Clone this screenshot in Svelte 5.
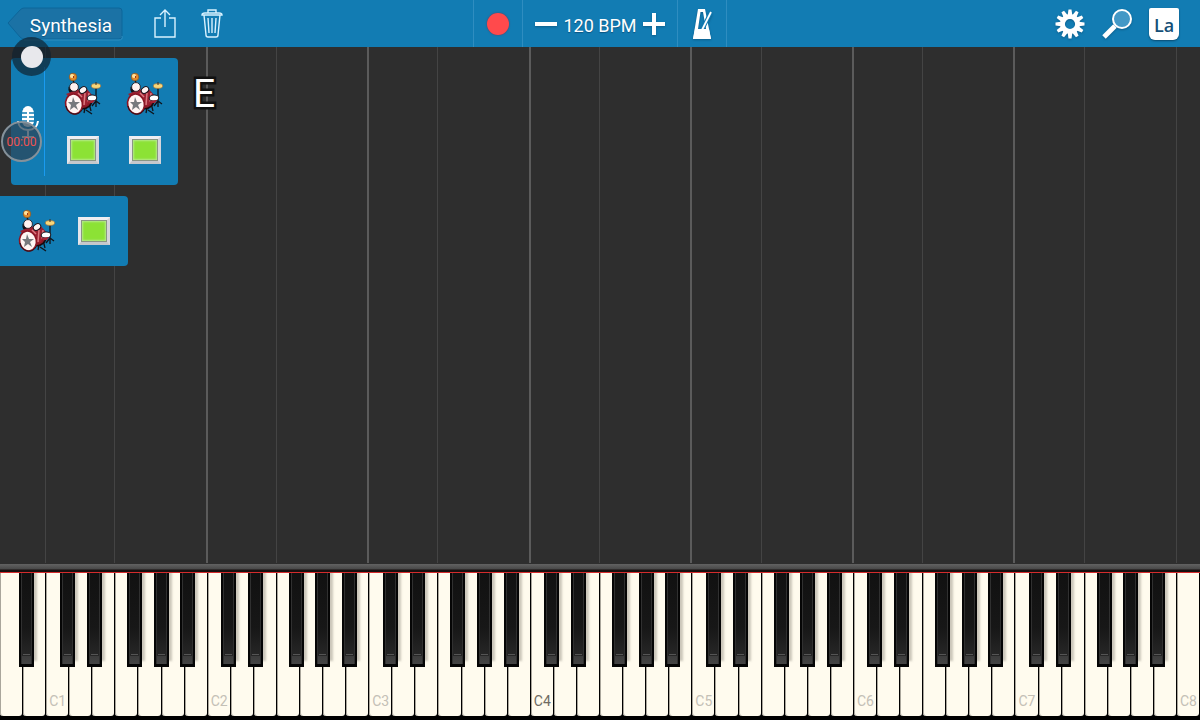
<script lang="ts">
  type Key = {
    name: string;
    octave: number;
    sharp: boolean;
  };

  const letters = ['A', 'B', 'C', 'D', 'E', 'F', 'G'];

  const keys: Key[] = Array.from({ length: 52 }, (_, i) => {
    const name = letters[i % 7];
    return {
      name,
      octave: Math.floor((i + 5) / 7),
      sharp: i < 51 && name !== 'B' && name !== 'E',
    };
  });

  let bpm = 120;
  let recording = false;
  let ticking = false;

  function guide(key: Key) {
    if (key.name === 'E') return 'thin';
    if (key.name !== 'B') return '';
    return key.octave > 0 && key.octave < 7 ? 'octave' : 'thin';
  }
</script>

{#snippet drums()}
  <button class="instrument" aria-label="Drums">
    <svg width="38" height="44" viewBox="0 0 38 44">
      <g fill="none" stroke="#10131a">
        <path d="M32 15V35M32 29L28 34M32 29L36 32M22 31L20 41M22 38L28 42M25 31L27 39M9 7L10 12" stroke-width="1.3" />
        <path d="M6 15Q5 21 10 20L16 20" stroke-width="3" />
      </g>
      <ellipse cx="18" cy="28" rx="10" ry="9" fill="#8d1827" stroke="#160b10" stroke-width="1.5" />
      <path d="M2 22L12 18L22 16L28 23L23 33L15 35Z" fill="#9c2131" />
      <path d="M14 21L18 25M21 21L20 33M25 21L24 30" stroke="#dc7b82" stroke-width="1.5" />
      <circle cx="9" cy="5" r="3.8" fill="#e08b28" stroke="#8a5423" stroke-width="0.7" />
      <circle cx="8" cy="4" r="2" fill="#ffe39b" />
      <path d="M9 4L10 5L9 6" fill="none" stroke="#a33119" />
      <circle cx="10" cy="15" r="4.4" fill="#fff1f0" stroke="#16111a" stroke-width="0.8" />
      <ellipse cx="19" cy="18" rx="4" ry="3" fill="#fff4f3" stroke="#17111a" transform="rotate(-35 19 18)" />
      <ellipse cx="28" cy="26" rx="4.8" ry="3" fill="#fff" stroke="#17111a" transform="rotate(-5 28 26)" />
      <path d="M23 29L31 28L29 31L25 31Z" fill="#a42335" />
      <ellipse cx="32" cy="14" rx="4.7" ry="2.4" fill="#f8d77a" stroke="#a8763b" stroke-width="0.7" />
      <path d="M32 10V13" stroke="#382e22" />
      <ellipse cx="10" cy="32" rx="8.4" ry="10" fill="#fff5f3" stroke="#8a1524" stroke-width="1.6" transform="rotate(-12 10 32)" />
      <path d="M2 34Q3 40 9 42Q15 43 18 38" fill="none" stroke="#26121a" />
      <path d="M9 25L11 30L16 30L12 33L14 38L10 35L6 38L7 33L4 30L8 30Z" fill="#77797d" />
    </svg>
  </button>
{/snippet}

<div class="app">
  <header class="toolbar">
    <div class="group">
      <button class="back">
        <svg width="116" height="34" viewBox="0 0 116 34" aria-hidden="true">
          <path d="M1 16L13 3Q15 1 17 1H112Q115 1 115 4V29Q115 32 112 32H17Q15 32 13 30Z" fill="#1b72a5" stroke="#0d669a" />
          <path d="M17 33H112Q116 33 115 29" fill="none" stroke="#2f8dc0" />
        </svg>
        <span>Synthesia</span>
      </button>
      <button class="icon" aria-label="Share">
        <svg width="24" height="30" viewBox="0 0 24 30" fill="none" stroke="#d9f2ff" stroke-width="1.4">
          <path d="M8 9H2V28H22V9H16M12 18V2M7 6L12 1L17 6" />
        </svg>
      </button>
      <button class="icon trash" aria-label="Delete">
        <svg width="22" height="30" viewBox="0 0 22 30" fill="none" stroke="#d9f2ff" stroke-width="1.4">
          <path d="M1 6Q1 4 4 4H18Q21 4 21 6ZM7 4V1H15V4M3 6L5 26Q5 28 7 28H15Q17 28 17 26L19 6M7 9L8 24M11 9V24M15 9L14 24" />
        </svg>
      </button>
    </div>

    <div class="transport">
      <button class="cell" aria-label="Record" aria-pressed={recording} on:click={() => (recording = !recording)}>
        <span class="dot"></span>
      </button>
      <div class="cell tempo">
        <button aria-label="Slower" on:click={() => (bpm -= 1)}>
          <svg width="22" height="22" viewBox="0 0 22 22"><path d="M0 9H22V13H0Z" fill="#fff" /></svg>
        </button>
        <span>{bpm} BPM</span>
        <button aria-label="Faster" on:click={() => (bpm += 1)}>
          <svg width="22" height="22" viewBox="0 0 22 22"><path d="M0 9H9V0H13V9H22V13H13V22H9V13H0Z" fill="#fff" /></svg>
        </button>
      </div>
      <button class="cell" aria-label="Metronome" aria-pressed={ticking} on:click={() => (ticking = !ticking)}>
        <svg width="20" height="32" viewBox="0 0 20 32">
          <path fill-rule="evenodd" d="M6 1H13L19 31H1ZM8.5 4L6 21H14L11 4Z" fill="#fff" />
          <path d="M10 22L19 4" stroke="#127cb3" stroke-width="4" />
          <path d="M10 22L19 4" stroke="#fff" stroke-width="1.8" />
          <path d="M3 21H17L19 31H1Z" fill="#fff" />
        </svg>
      </button>
    </div>

    <div class="group tools">
      <button class="icon" aria-label="Settings">
        <svg width="30" height="30" viewBox="-15 -15 30 30">
          {#each Array.from({ length: 12 }) as _, i}
            <path d="M-2.3 -9L-1.5 -14.5H1.5L2.3 -9Z" fill="#fff" transform="rotate({i * 30})" />
          {/each}
          <circle r="7.6" fill="none" stroke="#fff" stroke-width="5" />
        </svg>
      </button>
      <button class="icon" aria-label="Zoom">
        <svg width="30" height="30" viewBox="0 0 30 30">
          <path d="M2 28L13 17" stroke="#fff" stroke-width="5" />
          <circle cx="20" cy="10" r="9" fill="#4398c6" stroke="#fff" stroke-width="2" />
        </svg>
      </button>
      <button class="icon label">La</button>
    </div>
  </header>

  <main class="roll">
    <div class="guides" aria-hidden="true">
      {#each keys as key}
        <span class={guide(key)}></span>
      {/each}
    </div>

    <div class="row">
      <section class="panel tracks">
        <div class="mic">
          <svg width="22" height="34" viewBox="0 0 22 34">
            <path d="M5 9A6 8 0 0 1 17 9V16A6 6 0 0 1 5 16Z" fill="#fff" />
            <path d="M5 8H10M12 8H17M5 12H10M12 12H17M5 16H10M12 16H17" stroke="#127cb3" stroke-width="1.3" />
            <path d="M1 16Q2 25 11 25T21 16M11 25V31M5 32H17" fill="none" stroke="#fff" stroke-width="2" />
          </svg>
        </div>
        <div class="slots">
          {@render drums()}
          {@render drums()}
          <button class="pad" aria-label="Track 1"></button>
          <button class="pad" aria-label="Track 2"></button>
        </div>
      </section>
      <span class="note">E</span>
    </div>

    <section class="panel single">
      {@render drums()}
      <button class="pad" aria-label="Track"></button>
    </section>
  </main>

  <section class="keyboard">
    <div class="rail"></div>
    <div class="keys">
      {#each keys as key, i}
        <div class="key">
          <button class="white" class:middle={i === 23} aria-label="{key.name}{key.octave}">
            {#if key.name === 'C'}C{key.octave}{/if}
          </button>
          {#if key.sharp}
            <button class="black {key.name}" aria-label="{key.name}♯"></button>
          {/if}
        </div>
      {/each}
    </div>
  </section>

  <button class="bubble" aria-label="Recorder"><span></span></button>
  <div class="timer">00:00</div>
</div>

<style>
  :global(body) {
    background: #2e2e2e;
  }

  .app {
    position: relative;
    display: flex;
    flex-direction: column;
    min-height: 100vh;
    overflow: hidden;
    font-family: Roboto, sans-serif;
  }

  button {
    border: 0;
    padding: 0;
    background: none;
    color: inherit;
    font: inherit;
    cursor: pointer;
  }

  svg {
    display: block;
  }

  .toolbar {
    display: grid;
    grid-template-columns: 1fr auto 1fr;
    height: 47px;
    background: #127cb3;
    color: #fff;
  }

  .group {
    display: flex;
    align-items: center;
    padding-left: 7px;
  }

  .back {
    display: grid;
    align-items: center;
    margin-right: 30px;
    font-size: 19px;
    line-height: 34px;
  }

  .back svg,
  .back span {
    grid-area: 1 / 1;
  }

  .back span {
    padding: 4px 0 0 12px;
    text-shadow: 0 1px 1px #0b5480;
  }

  .trash {
    margin-left: 24px;
  }

  .tools {
    justify-content: flex-end;
    gap: 17px;
    padding: 0 21px 0 0;
  }

  .tools svg,
  .transport svg {
    filter: drop-shadow(0 1px 1px #0a4a7099);
  }

  .label {
    width: 30px;
    height: 32px;
    border-radius: 2px 2px 6px 6px;
    background: #fff;
    box-shadow: 0 1px 2px #0a4a70;
    color: #154f77;
    font: 600 18px/34px "Open Sans", sans-serif;
  }

  .transport {
    display: flex;
    border-left: 1px solid #2f8dc0;
  }

  .cell {
    display: flex;
    align-items: center;
    justify-content: center;
    box-sizing: border-box;
    width: 49px;
    border-right: 1px solid #2f8dc0;
  }

  .dot {
    width: 22px;
    height: 22px;
    border-radius: 50%;
    background: #ff4a4c;
    box-shadow: 0 0 2px #6b3550;
  }

  .tempo {
    gap: 6px;
    width: 155px;
    font-size: 18px;
  }

  .tempo span {
    padding-top: 3px;
    text-shadow: 0 1px 1px #0b5480;
  }

  .roll {
    position: relative;
    flex: 1;
    padding-top: 11px;
    background: #2e2e2e;
  }

  .guides {
    position: absolute;
    inset: 0 0 1px;
    display: grid;
    grid-template-columns: repeat(52, 1fr);
  }

  .thin {
    border-right: 1px solid #444;
  }

  .octave {
    border-right: 2px solid #5b5b5b;
  }

  .row {
    position: relative;
    display: flex;
    align-items: flex-start;
    gap: 15px;
    margin: 0 0 11px 11px;
  }

  .panel {
    position: relative;
    display: flex;
    align-items: center;
    background: #127cb3;
  }

  .tracks {
    border-radius: 4px;
    height: 127px;
  }

  .mic {
    display: flex;
    align-items: center;
    justify-content: center;
    box-sizing: border-box;
    width: 34px;
    height: 109px;
    border-right: 1px solid #1a9bf0;
  }

  .slots {
    display: grid;
    grid-template-columns: 38px 38px;
    gap: 20px 24px;
    align-items: center;
    justify-items: center;
    width: 133px;
    box-sizing: border-box;
    padding: 0 0 7px 19px;
  }

  .pad {
    width: 32px;
    height: 28px;
    border: 3px solid;
    border-color: #eeeef2 #d5d5dc #c6c8cc #e5e5ea;
    background: #8ce235;
    box-shadow: inset 0 0 0 1px #8a9684, inset 0 0 2px 2px #b5e98b;
  }

  .note {
    margin-top: 13px;
    color: #fff;
    font-size: 39px;
    line-height: 46px;
    -webkit-text-stroke: 5px #111;
    stroke-linejoin: round;
    paint-order: stroke fill;
  }

  .single {
    gap: 22px;
    box-sizing: border-box;
    width: 128px;
    height: 70px;
    padding-left: 18px;
    border-radius: 0 4px 4px 0;
  }

  .rail {
    height: 8px;
    border-bottom: 1px solid #d52b2c;
    background: linear-gradient(#626262, #494949 5px, #171010 6px, #171010);
  }

  .keys {
    display: flex;
    height: 147px;
    overflow: hidden;
    background: #000;
  }

  .key {
    position: relative;
    flex: 1;
    padding: 0 1px 4px 0;
  }

  .white {
    display: flex;
    align-items: flex-end;
    width: 100%;
    height: 100%;
    padding: 0 0 7px 3px;
    border-radius: 0 0 3px 3px;
    background: #fffbee;
    box-shadow: inset 1px 0 #aaa69c;
    color: #c4c0b6;
    font-size: 14px;
    line-height: 16px;
  }

  .middle {
    color: #6f6b63;
  }

  .black {
    position: absolute;
    z-index: 1;
    top: 0;
    width: 15px;
    height: 94px;
    border: solid #050505;
    border-width: 0 2px 3px;
    background:
      linear-gradient(#555, #555) center 81px / 7px 1px no-repeat,
      linear-gradient(#3c3c3c, #444) center bottom / 11px 8px no-repeat,
      linear-gradient(#111, #171717 55px, #2b2b2b);
    box-shadow: inset 1px 0 #303030, inset -1px 0 #303030, 3px -6px 2px #aaa59a99;
  }

  .C {
    left: 58%;
  }

  .D {
    left: 75%;
  }

  .F {
    left: 52%;
  }

  .G {
    left: 67%;
  }

  .A {
    left: 82%;
  }

  .bubble {
    position: absolute;
    top: 37px;
    left: 12px;
    display: grid;
    place-items: center;
    width: 39px;
    height: 39px;
    border-radius: 50%;
    background: #0f2230b3;
  }

  .bubble span {
    width: 22px;
    height: 22px;
    border-radius: 50%;
    background: #e8e8ec;
  }

  .timer {
    position: absolute;
    top: 121px;
    left: 1px;
    box-sizing: border-box;
    width: 41px;
    height: 41px;
    border: 2px solid #85919a;
    border-radius: 50%;
    background: #2c4658bb;
    color: #ee5350;
    font-size: 12px;
    line-height: 38px;
    text-align: center;
  }
</style>
